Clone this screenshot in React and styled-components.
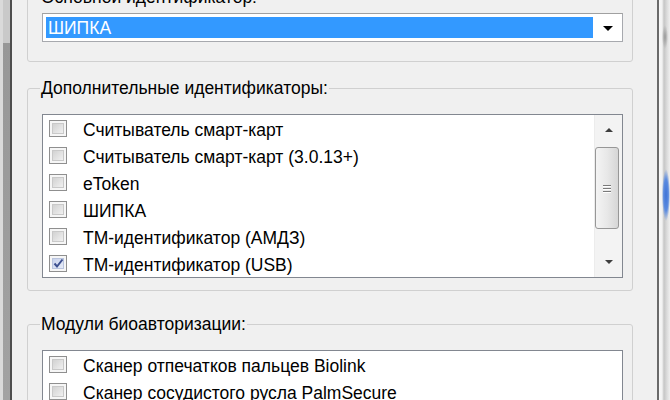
import React from "react";
import styled, { createGlobalStyle } from "styled-components";

const GlobalStyle = createGlobalStyle`
	html, body {
		margin: 0;
		padding: 0;
		background: #f0f0f0;
	}
	body {
		font-family: "Liberation Sans", Arial, sans-serif;
		font-size: 17.5px;
		color: #000;
	}
`;

const Screen = styled.div`
	display: flex;
	width: 670px;
	height: 400px;
	overflow: hidden;
	background: #f0f0f0;
`;

const LeftEdge = styled.div`
	flex: 0 0 12px;
	border-right: 2px solid #4e4e4e;
	box-sizing: border-box;
	background:
		linear-gradient(to bottom, #c9c9c9 0, #c9c9c9 43px, #979797 43px, #a2a2a2 100%);
	box-shadow: inset 3px 0 0 #dadada;
`;

const RightEdge = styled.div`
	flex: 0 0 13px;
	border-left: 2px solid #6a6a6a;
	box-sizing: border-box;
	background:
		radial-gradient(ellipse 4px 26px at 7px 195px, #3f73d6 0, #5b8be0 60%, transparent 100%),
		radial-gradient(ellipse 3px 12px at 6px 37px, #9a9a9a 0, transparent 100%),
		linear-gradient(to right, #f7f7f7 0, #f2f2f2 3px, #c6c6c6 5px, #dcdcdc 8px, #efefef 11px);
`;

const Dialog = styled.div`
	flex: 1;
	display: flex;
	flex-direction: column;
	padding: 0 24px 0 15px;
`;

const Group = styled.fieldset`
	margin: ${({ $mt }) => $mt}px 0 0;
	padding: ${({ $pt }) => $pt}px 9px ${({ $pb }) => $pb}px 14px;
	min-width: 0;
	border: 1px solid #d0d0d0;
	border-radius: 3px;
	flex-shrink: 0;
`;

const Legend = styled.legend`
	padding: 0 1px;
	margin-left: -2px;
	line-height: 20px;
	height: 20px;
	white-space: nowrap;
`;

const Combo = styled.div`
	display: flex;
	height: 29px;
	box-sizing: border-box;
	border: 1px solid #a7a9ae;
	border-top-color: #a0a0a0;
	background: #fff;
`;

const ComboValue = styled.div`
	flex: 1;
	margin: 3px 0 3px 3px;
	background: #3399ff;
	color: #fff;
	line-height: 22px;
	padding-left: 2px;
`;

const ComboButton = styled.div`
	flex: 0 0 29px;
	display: flex;
	align-items: center;
	justify-content: center;

	&::after {
		content: "";
		border-left: 5px solid transparent;
		border-right: 5px solid transparent;
		border-top: 5px solid #000;
		margin-top: 1px;
	}
`;

const ListBox = styled.div`
	display: flex;
	border: 1px solid #828790;
	background: #fff;
`;

const Items = styled.div`
	flex: 1;
	display: flex;
	flex-direction: column;
`;

const Item = styled.div`
	display: flex;
	align-items: center;
	height: 27px;
	padding-left: 6px;
	gap: 16px;
	white-space: nowrap;
`;

const ItemLabel = styled.span`
	padding-top: 3px;
`;

const Check = styled.span`
	position: relative;
	flex: 0 0 auto;
	width: 18px;
	height: 17px;
	box-sizing: border-box;
	border: 1px solid #8f8f8f;
	background: #f6f6f6;
	padding: 2px;

	&::before {
		content: "";
		display: block;
		width: 100%;
		height: 100%;
		box-sizing: border-box;
		border: 1px solid ${({ $on }) => ($on ? "#b9c4de" : "#c9c9c9")};
		background: ${({ $on }) =>
			$on
				? "linear-gradient(135deg, #c8d2ec 0%, #e6ebf7 100%)"
				: "linear-gradient(135deg, #d2d2d2 0%, #f0f0f0 100%)"};
	}

	svg {
		position: absolute;
		left: 3px;
		top: 2px;
	}
`;

const ScrollBar = styled.div`
	flex: 0 0 27px;
	display: flex;
	flex-direction: column;
	background: #f3f3f3;
	border-left: 1px solid #ececec;
`;

const ArrowButton = styled.div`
	height: 30px;
	display: flex;
	align-items: center;
	justify-content: center;

	&::after {
		content: "";
		border-left: 4px solid transparent;
		border-right: 4px solid transparent;
		${({ $dir }) =>
			$dir === "up" ? "border-bottom: 4px solid #3e3e3e;" : "border-top: 4px solid #3e3e3e;"}
	}
`;

const Track = styled.div`
	flex: 1;
	display: flex;
	flex-direction: column;
	padding: 2px 3px 0 0;
`;

const Thumb = styled.div`
	height: 82px;
	box-sizing: border-box;
	border: 1px solid #979797;
	border-radius: 3px;
	background: linear-gradient(to right, #f4f4f4 0%, #e8e8e8 50%, #d6d6d6 100%);
	display: flex;
	flex-direction: column;
	align-items: center;
	justify-content: center;
	gap: 2px;
`;

const Grip = styled.span`
	width: 8px;
	height: 1px;
	background: #7a7a7a;
	box-shadow: 0 1px 0 #fff;
`;

const CheckMark = () => (
	<svg width="11" height="11" viewBox="0 0 11 11">
		<path d="M1.5 5.5 L4 8.5 L9.5 1.5" fill="none" stroke="#3c4f8f" strokeWidth="2" />
	</svg>
);

const CheckItem = ({ label, checked }) => (
	<Item>
		<Check $on={checked}>{checked && <CheckMark />}</Check>
		<ItemLabel>{label}</ItemLabel>
	</Item>
);

const identifiers = [
	{ label: "Считыватель смарт-карт" },
	{ label: "Считыватель смарт-карт (3.0.13+)" },
	{ label: "eToken" },
	{ label: "ШИПКА" },
	{ label: "ТМ-идентификатор (АМДЗ)" },
	{ label: "ТМ-идентификатор (USB)", checked: true },
];

const bioModules = [
	{ label: "Сканер отпечатков пальцев Biolink" },
	{ label: "Сканер сосудистого русла PalmSecure" },
];

const App = () => {
	return (
		<>
			<GlobalStyle />
			<Screen>
				<LeftEdge />
				<Dialog>
					<Group $mt={-13} $pt={6} $pb={19}>
						<Legend>Основной идентификатор:</Legend>
						<Combo>
							<ComboValue>ШИПКА</ComboValue>
							<ComboButton />
						</Combo>
					</Group>

					<Group $mt={16} $pt={16} $pb={12}>
						<Legend>Дополнительные идентификаторы:</Legend>
						<ListBox>
							<Items>
								{identifiers.map((it) => (
									<CheckItem key={it.label} {...it} />
								))}
							</Items>
							<ScrollBar>
								<ArrowButton $dir="up" />
								<Track>
									<Thumb>
										<Grip />
										<Grip />
										<Grip />
									</Thumb>
								</Track>
								<ArrowButton $dir="down" />
							</ScrollBar>
						</ListBox>
					</Group>

					<Group $mt={23} $pt={16} $pb={12}>
						<Legend>Модули биоавторизации:</Legend>
						<ListBox>
							<Items>
								{bioModules.map((it) => (
									<CheckItem key={it.label} {...it} />
								))}
								<Item />
							</Items>
						</ListBox>
					</Group>
				</Dialog>
				<RightEdge />
			</Screen>
		</>
	);
};

export default App;
